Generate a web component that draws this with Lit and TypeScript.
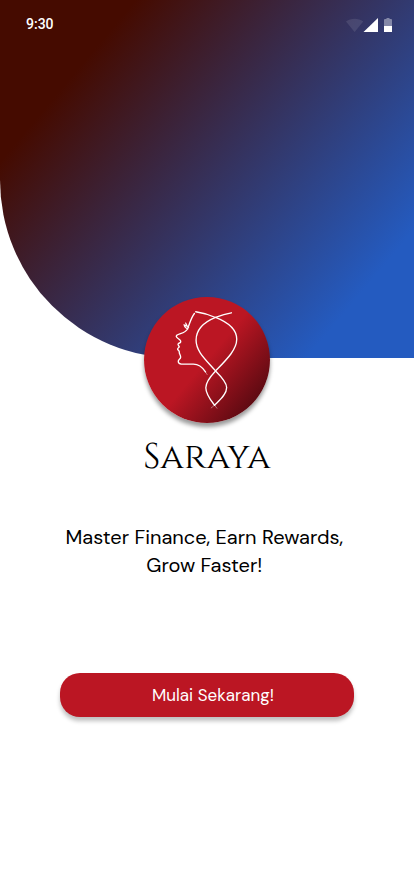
import { LitElement, html, css } from "lit";
import { customElement } from "lit/decorators.js";

@customElement("status-bar")
class StatusBar extends LitElement {
  static styles = css`
    :host {
      display: flex;
      justify-content: space-between;
      align-items: center;
      padding: 16px 22px 0 26px;
      color: #fff;
      font: 500 14px/16px Roboto, sans-serif;
    }
    .icons {
      display: block;
      width: 46px;
      height: 16px;
    }
  `;

  render() {
    return html`
      <span>9:30</span>
      <svg class="icons" viewBox="0 0 46 16" fill="#fff" role="img" aria-label="Signal and battery">
        <path d="M0 5.600C5 1.900 12.200 1.900 17.200 5.600L8.600 16Z" opacity=".1" />
        <path d="M17 16.500L32 2V16.500Z" />
        <path d="M38 10V4Q38 3 39 3H40.500V2H43.500V3H45Q46 3 46 4V10Z" opacity=".4" />
        <path d="M38 10H46V16H38Z" />
      </svg>
    `;
  }
}

@customElement("saraya-logo")
class SarayaLogo extends LitElement {
  static styles = css`
    :host {
      display: block;
      width: 126px;
      height: 126px;
      border-radius: 50%;
      background: linear-gradient(130deg, #bb1623 50%, #43070d 96%);
      box-shadow: 0 4px 4px rgba(0, 0, 0, 0.4);
    }
    .mark {
      display: block;
      width: 100%;
      height: 100%;
    }
  `;

  render() {
    return html`
      <svg class="mark" viewBox="21 21 375 375" fill="none" stroke="#fff" stroke-width="4" stroke-linecap="round" stroke-linejoin="round" role="img" aria-label="Saraya logo">
        <path d="M175 65C195 68 216 74 234 82C272 97 297 119 297 147C297 178 266 208 234 241C215 261 205 276 205 291C205 311 220 329 231 343" />
        <path d="M281 68C264 71 249 76 234 82C197 97 176 121 176 150C176 183 204 207 234 241C254 261 267 276 267 290C267 312 245 329 231 343" />
        <path d="M231 343L238 352M231 343L221 351" stroke-width="2" opacity=".6" />
        <path d="M171 70C160 84 157 101 150 117C144 128 129 129 118 135C114 140 122 144 128 149C133 154 130 157 123 160C120 163 125 166 126 169C126 172 120 173 121 177C123 180 127 181 126 185C125 190 131 195 130 201C129 207 122 207 123 214C124 221 130 221 138 221H168C186 221 198 235 204 244" />
        <path d="M204 244L209 252" stroke-width="2" opacity=".6" />
        <path d="M152 116C145 114 141 109 140 103C143 107 145 108 147 108L145 98C148 104 150 111 154 112" stroke-width="3" />
      </svg>
    `;
  }
}

@customElement("app-root")
class AppRoot extends LitElement {
  static styles = css`
    :host {
      display: block;
      min-height: 100vh;
      background: #fff;
      color: #000;
      font-family: "DM Sans", Inter, sans-serif;
    }
    .hero {
      height: 358px;
      border-bottom-left-radius: 178px;
      background: linear-gradient(130deg, #450b00 19%, #245bc0 85%);
    }
    .content {
      display: flex;
      flex-direction: column;
      align-items: center;
      margin-top: -61px;
      padding: 0 60px 40px;
    }
    .title {
      margin: 12px 0 0;
      font: 400 36px/44px Cinzel, "Liberation Serif", serif;
    }
    .tagline {
      margin: 44px 0 0;
      font-size: 20px;
      line-height: 28px;
      text-align: center;
    }
    .line {
      display: block;
      white-space: nowrap;
    }
    .start {
      width: 100%;
      height: 44px;
      margin-top: 94px;
      padding: 0 0 0 12px;
      border: 0;
      border-radius: 20px;
      background: #bb1623;
      box-shadow: 0 4px 4px rgba(0, 0, 0, 0.25);
      color: #fff;
      font: inherit;
      font-size: 17px;
      cursor: pointer;
    }
  `;

  render() {
    return html`
      <header class="hero"><status-bar></status-bar></header>
      <main class="content">
        <saraya-logo></saraya-logo>
        <h1 class="title">Saraya</h1>
        <p class="tagline">
          <span class="line">Master Finance, Earn Rewards,&nbsp;</span>
          <span class="line">Grow Faster!&nbsp;</span>
        </p>
        <button class="start" type="button">Mulai Sekarang!</button>
      </main>
    `;
  }
}
